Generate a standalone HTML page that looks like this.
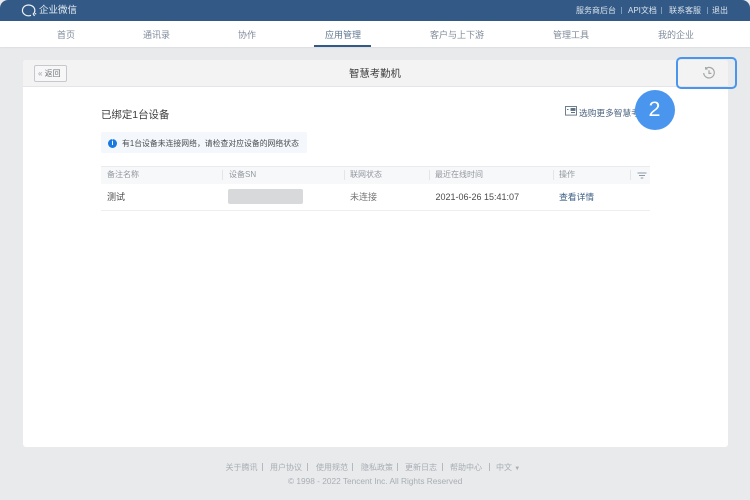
<!DOCTYPE html>
<html lang="zh"><head><meta charset="utf-8"><title>智慧考勤机</title>
<style>
html,body{margin:0;padding:0;width:750px;height:500px;overflow:hidden;background:#e8eaec}
body{position:relative;font-family:"Liberation Sans","Noto Sans CJK SC",sans-serif}
.t{position:absolute;white-space:nowrap;line-height:12px}
.b{position:absolute}
</style></head><body>
<div class="b" style="left:0;top:0;width:750px;height:21px;background:#335a86;border-radius:8px 8px 0 0"></div>
<svg class="b" style="left:21px;top:3px" width="17" height="15" viewBox="0 0 17 15" fill="none" stroke="#eef2f7" stroke-width="1.2"><path d="M11.8 11.4A6.2 5.4 0 1 0 7.6 12.8c1 0 1.8-.2 2.4-.5"/><path d="M12.4 11.4l1.2 1.4M14 10.6l1.2.3"/></svg>
<div class="t" style="left:39px;top:5px;font-size:9.5px;color:#e4eaf1">企业微信</div>
<div class="t" style="left:576px;top:5px;font-size:8px;color:#dbe3ed">服务商后台</div>
<div class="b" style="left:621px;top:7px;width:1px;height:7px;background:#7f9ab8"></div>
<div class="t" style="left:628px;top:5px;font-size:8px;color:#dbe3ed">API文档</div>
<div class="b" style="left:661px;top:7px;width:1px;height:7px;background:#7f9ab8"></div>
<div class="t" style="left:669px;top:5px;font-size:8px;color:#dbe3ed">联系客服</div>
<div class="b" style="left:707px;top:7px;width:1px;height:7px;background:#7f9ab8"></div>
<div class="t" style="left:712px;top:5px;font-size:8px;color:#dbe3ed">退出</div>

<div class="b" style="left:0;top:21px;width:750px;height:26px;background:#fff;box-shadow:0 1px 1px #dcdee1"></div>
<div class="t" style="left:57px;top:29px;font-size:9px;color:#7f8b9b">首页</div>
<div class="t" style="left:143px;top:29px;font-size:9px;color:#7f8b9b">通讯录</div>
<div class="t" style="left:238px;top:29px;font-size:9px;color:#7f8b9b">协作</div>
<div class="t" style="left:325px;top:29px;font-size:9px;color:#5f7791">应用管理</div>
<div class="b" style="left:314px;top:45px;width:57px;height:2px;background:#335a86"></div>
<div class="t" style="left:430px;top:29px;font-size:9px;color:#7f8b9b">客户与上下游</div>
<div class="t" style="left:553px;top:29px;font-size:9px;color:#7f8b9b">管理工具</div>
<div class="t" style="left:658px;top:29px;font-size:9px;color:#7f8b9b">我的企业</div>

<div class="b" style="left:23px;top:60px;width:705px;height:387px;background:#fff;border-radius:3px"></div>
<div class="b" style="left:23px;top:60px;width:705px;height:26px;background:#f3f3f4;border-bottom:1px solid #e3e5ea;border-radius:3px 3px 0 0"></div>
<div class="b" style="left:34px;top:65px;width:31px;height:15px;border:1px solid #c6c8cb;border-radius:2px;background:#f7f7f7"></div>
<div class="t" style="left:38px;top:68px;font-size:8px;color:#6f7379"><span style="color:#9aa0a6">«</span> 返回</div>
<div class="t" style="left:349px;top:69px;font-size:10.4px;color:#3a3a3a">智慧考勤机</div>

<div class="b" style="left:675.5px;top:56.5px;width:57px;height:28px;border:2.5px solid #4a96ee;border-radius:5px"></div>
<svg class="b" style="left:702px;top:66px" width="14" height="14" viewBox="0 0 14 14" fill="none" stroke="#a5a7a9" stroke-width="1.2"><path d="M3.6 2.6A5.3 5.3 0 1 1 1.7 7"/><path d="M3.6 1v2h2M7 4.2V7.4H9.4"/></svg>

<div class="t" style="left:101px;top:110px;font-size:10.45px;color:#3c3c3c">已绑定1台设备</div>
<svg class="b" style="left:565px;top:106px" width="12" height="10" viewBox="0 0 12 10" fill="none" stroke="#5c7086" stroke-width=".9"><rect x=".5" y=".5" width="11" height="8.6"/><rect x="6" y="2.5" width="4" height="2" fill="#5c7086"/><path d="M6 6.5h4M2 3.5h1.5"/></svg>
<div class="t" style="left:579px;top:107px;font-size:8.7px;color:#4b6480">选购更多智慧考勤机</div>

<div class="b" style="left:101px;top:132px;width:206px;height:21px;background:#f4f7fb;border-radius:2px"></div>
<div class="b" style="left:108px;top:138.5px;width:9px;height:9px;border-radius:50%;background:#1a7ae0;color:#fff;font-size:7px;line-height:9px;text-align:center;font-weight:bold">i</div>
<div class="t" style="left:122px;top:138px;font-size:7.85px;color:#4a4d52">有1台设备未连接网络，请检查对应设备的网络状态</div>

<div class="b" style="left:101px;top:166px;width:549px;height:18px;background:#f7f8fa;border-top:1px solid #e9ebee;box-sizing:border-box"></div>
<div class="t" style="left:107px;top:169px;font-size:8px;color:#92979d">备注名称</div>
<div class="b" style="left:222px;top:170px;width:1px;height:10px;background:#e3e5e8"></div>
<div class="t" style="left:229px;top:169px;font-size:8px;color:#92979d">设备SN</div>
<div class="b" style="left:344px;top:170px;width:1px;height:10px;background:#e3e5e8"></div>
<div class="t" style="left:350px;top:169px;font-size:8px;color:#92979d">联网状态</div>
<div class="b" style="left:429px;top:170px;width:1px;height:10px;background:#e3e5e8"></div>
<div class="t" style="left:435px;top:169px;font-size:8px;color:#92979d">最近在线时间</div>
<div class="b" style="left:553px;top:170px;width:1px;height:10px;background:#e3e5e8"></div>
<div class="t" style="left:559px;top:169px;font-size:8px;color:#92979d">操作</div>
<div class="b" style="left:630px;top:170px;width:1px;height:10px;background:#e3e5e8"></div>
<svg class="b" style="left:637px;top:172px" width="10" height="7" viewBox="0 0 10 7" fill="none" stroke="#8c98a6" stroke-width=".9"><path d="M.5 1h9M2 3.5h6M3.7 6h2.6"/></svg>

<div class="t" style="left:107px;top:191px;font-size:9px;color:#4a4a4a">测试</div>
<div class="b" style="left:228px;top:189px;width:75px;height:15px;background:#d8d9da;border-radius:2px"></div>
<div class="t" style="left:350px;top:191px;font-size:9px;color:#777">未连接</div>
<div class="t" style="left:435.5px;top:191px;font-size:9px;color:#4a4a4a">2021-06-26 15:41:07</div>
<div class="t" style="left:559px;top:191px;font-size:8.8px;color:#3f5f86">查看详情</div>
<div class="b" style="left:101px;top:210px;width:549px;height:1px;background:#eceef0"></div>

<div class="b" style="left:635px;top:90px;width:40px;height:40px;border-radius:50%;background:#4a96ee;color:#fff;font-size:21.5px;line-height:39px;text-align:center;text-indent:-1px">2</div>

<div class="t" style="left:225.5px;top:462px;font-size:8px;color:#a9adb2">关于腾讯</div>
<div class="b" style="left:262px;top:463px;width:1px;height:8px;background:#b5b8bc"></div>
<div class="t" style="left:270px;top:462px;font-size:8px;color:#a9adb2">用户协议</div>
<div class="b" style="left:307px;top:463px;width:1px;height:8px;background:#b5b8bc"></div>
<div class="t" style="left:316px;top:462px;font-size:8px;color:#a9adb2">使用规范</div>
<div class="b" style="left:352px;top:463px;width:1px;height:8px;background:#b5b8bc"></div>
<div class="t" style="left:361px;top:462px;font-size:8px;color:#a9adb2">隐私政策</div>
<div class="b" style="left:397px;top:463px;width:1px;height:8px;background:#b5b8bc"></div>
<div class="t" style="left:405px;top:462px;font-size:8px;color:#a9adb2">更新日志</div>
<div class="b" style="left:442px;top:463px;width:1px;height:8px;background:#b5b8bc"></div>
<div class="t" style="left:450px;top:462px;font-size:8px;color:#a9adb2">帮助中心</div>
<div class="b" style="left:489px;top:463px;width:1px;height:8px;background:#b5b8bc"></div>
<div class="t" style="left:496px;top:462px;font-size:8px;color:#a9adb2">中文 <span style="font-size:6px">▼</span></div>
<div class="t" style="left:288px;top:475px;font-size:8.3px;color:#a9adb2">© 1998 - 2022 Tencent Inc. All Rights Reserved</div>
</body></html>
